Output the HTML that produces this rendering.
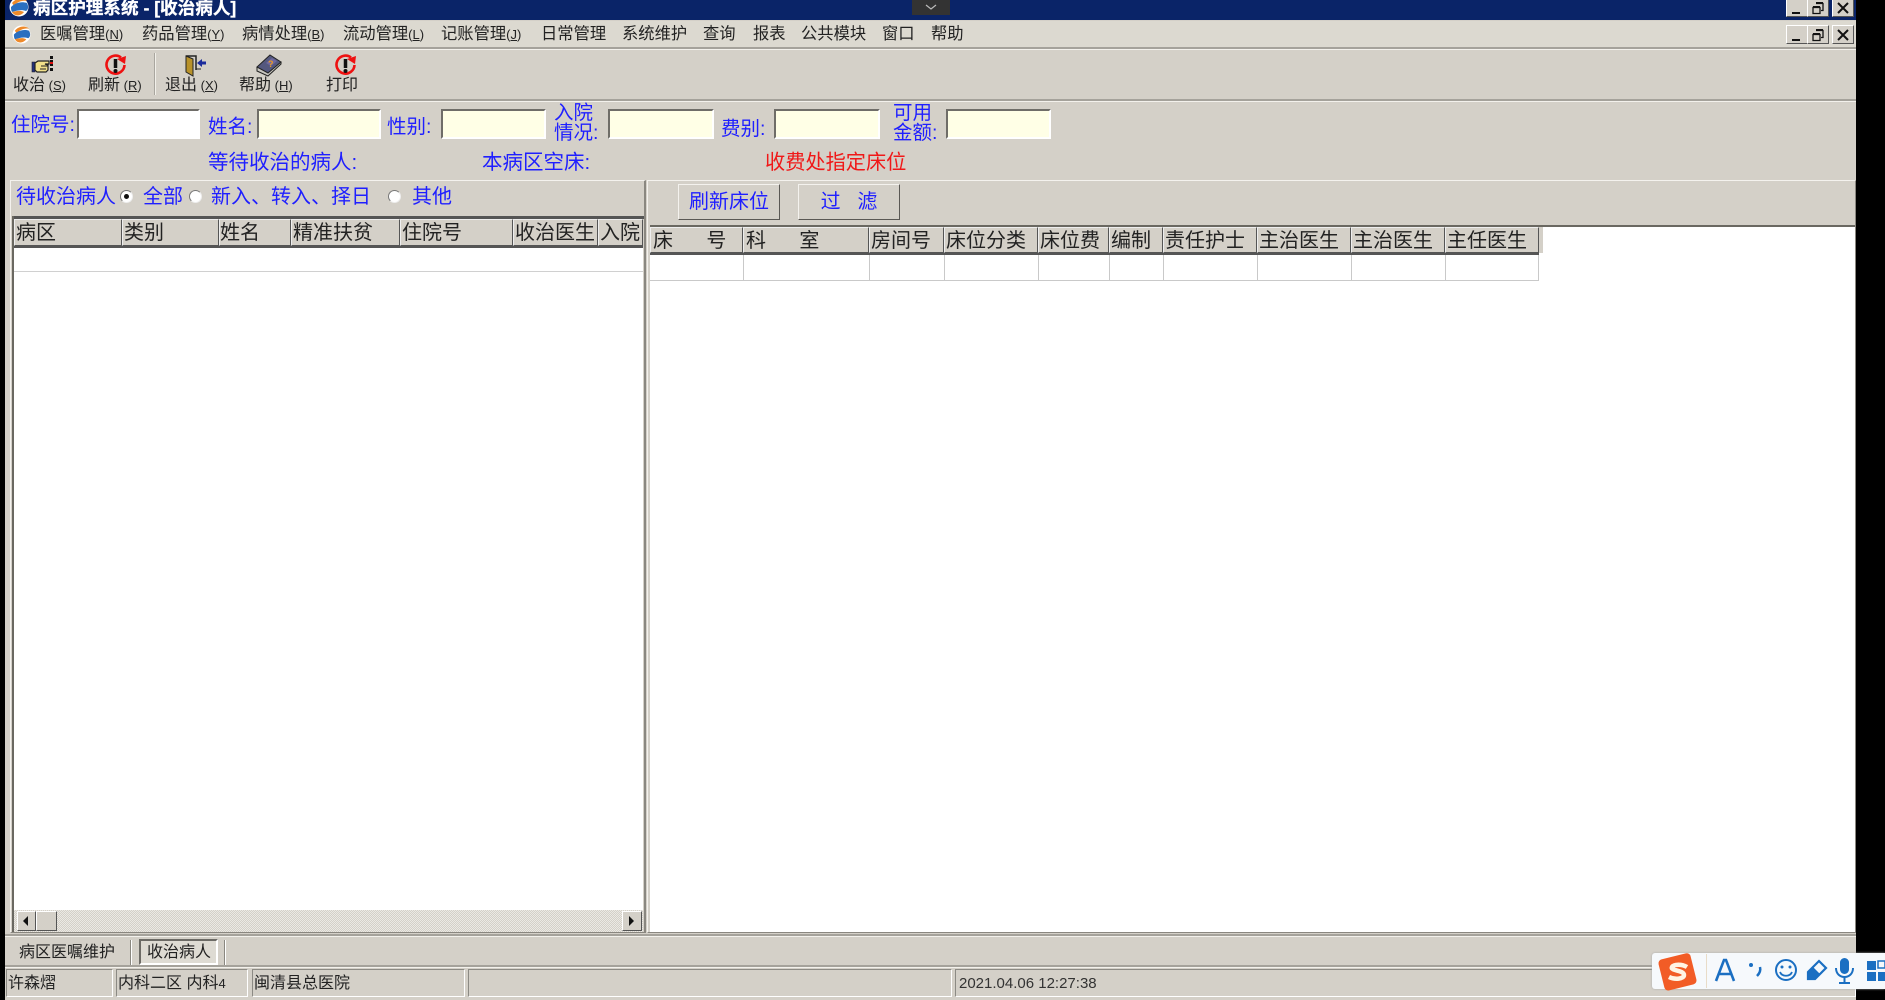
<!DOCTYPE html>
<html lang="zh"><head><meta charset="utf-8"><title>病区护理系统</title>
<style>
html,body{margin:0;padding:0;width:1885px;height:1000px;overflow:hidden;background:#000}
#s{position:absolute;left:0;top:0;width:1885px;height:1000px;overflow:hidden;background:#000;font-family:"Liberation Sans","WenQuanYi Zen Hei","Noto Sans CJK SC",sans-serif}
#a{position:absolute;left:5px;top:0;width:1851px;height:1000px;background:#d4d0c8;overflow:hidden;filter:blur(.35px)}
.b{position:absolute;box-sizing:border-box}
.t{position:absolute;white-space:nowrap;line-height:1;color:#222}
.u{color:#1f1fff}
.m{font-size:16.300px;top:26px;color:#222}
.m small,.l small{font-size:13px;letter-spacing:0}
.l{font-size:16px;top:78px}
.i{position:absolute;box-sizing:border-box;height:30px;top:109px;background:#ffffe6;border:2px solid;border-color:#6f6d68 #fff #fff #6f6d68}
.f{font-size:19.500px}
.g{font-size:20.500px}
.ln{position:absolute;height:2px;background:#a5a29b;border-bottom:1px solid #f3f1ec}
.w{position:absolute;box-sizing:border-box;width:22px;height:19px;background:#d4d0c8;border:1px solid;border-color:#fff #555 #555 #fff}
.w svg{position:absolute;left:2px;top:1px}
.h{position:absolute;box-sizing:border-box;background:#d4d0c8;border:1px solid;border-color:#eee #555 #555 #eee;font-size:20px;line-height:26px;padding-left:1px;white-space:nowrap;overflow:hidden;color:#222}
.c{position:absolute;background:#c9c9c9;width:1px}
.ra{position:absolute;width:13px;height:13px;border-radius:50%;background:#fff;border:1px solid #777;border-right-color:#eee;border-bottom-color:#eee;box-sizing:border-box}
.st{position:absolute;box-sizing:border-box;top:969px;height:28px;border:1px solid;border-color:#8c8a84 #fff #fff #8c8a84;font-size:16px;line-height:27px;padding-left:1px;white-space:nowrap;color:#222}
</style></head><body>
<div id="s"><div id="a">
<!-- title -->
<div class="b" style="left:0;top:0;width:1851px;height:20px;background:#0a2468;overflow:hidden">
<div class="t" style="left:28px;top:0;font-size:17.600px;font-weight:bold;color:#fff;-webkit-text-stroke:.3px #fff">病区护理系统 - [收治病人]</div>
<svg style="position:absolute;left:4px;top:-3px" width="20" height="20" viewBox="0 0 20 20"><circle cx="10" cy="10" r="9.500" fill="#fff"/><path d="M3 6C7 1 14 0 18 4 13 3 8 5 5 9z" fill="#ee8a2a"/><path d="M2 10C6 6 12 4 18 6c2 4 1 7-1 8-5-2-10 0-14 1-1-2-1-3-1-5z" fill="#2a6fc0"/><path d="M3 15c4-1 8-2 12 0-3 4-9 5-12 0z" fill="#ee8a2a"/></svg>
</div>
<div class="b" style="left:907px;top:0;width:38px;height:15px;background:#333"><svg width="38" height="15"><path d="M14 5l5 4 5-4" stroke="#bbb" stroke-width="1.200" fill="none"/></svg></div>
<div class="w" style="left:1781px;top:-2px"><svg width="16" height="16"><path d="M3 13h8" stroke="#111" stroke-width="2"/></svg></div>
<div class="w" style="left:1802px;top:-2px"><svg width="16" height="16"><path d="M6 3.500h7v7h-2M3 7.500h7v6H3z" stroke="#111" stroke-width="1.300" fill="none"/><path d="M6 3h7M3 7h7" stroke="#111" stroke-width="2"/></svg></div>
<div class="w" style="left:1827px;top:-2px"><svg width="16" height="16"><path d="M3 3l10 10M13 3L3 13" stroke="#111" stroke-width="2"/></svg></div>
<!-- menu -->
<div class="b" style="left:0;top:21px;width:1851px;height:26px;background:#dcd9d0"></div>
<svg style="position:absolute;left:7px;top:25px" width="19" height="19" viewBox="0 0 20 20"><circle cx="10" cy="10" r="9.500" fill="#fff"/><path d="M3 6C7 1 14 0 18 4 13 3 8 5 5 9z" fill="#ee8a2a"/><path d="M2 10C6 6 12 4 18 6c2 4 1 7-1 8-5-2-10 0-14 1-1-2-1-3-1-5z" fill="#2a6fc0"/><path d="M3 15c4-1 8-2 12 0-3 4-9 5-12 0z" fill="#ee8a2a"/></svg>
<div class="t m" style="left:35px">医嘱管理<small>(<u>N</u>)</small></div>
<div class="t m" style="left:137px">药品管理<small>(<u>Y</u>)</small></div>
<div class="t m" style="left:237px">病情处理<small>(<u>B</u>)</small></div>
<div class="t m" style="left:338px">流动管理<small>(<u>L</u>)</small></div>
<div class="t m" style="left:436px">记账管理<small>(<u>J</u>)</small></div>
<div class="t m" style="left:536px">日常管理</div>
<div class="t m" style="left:617px">系统维护</div>
<div class="t m" style="left:698px">查询</div>
<div class="t m" style="left:748px">报表</div>
<div class="t m" style="left:796px">公共模块</div>
<div class="t m" style="left:877px">窗口</div>
<div class="t m" style="left:926px">帮助</div>
<div class="w" style="left:1781px;top:25px"><svg width="16" height="16"><path d="M3 13h8" stroke="#111" stroke-width="2"/></svg></div>
<div class="w" style="left:1802px;top:25px"><svg width="16" height="16"><path d="M6 3.500h7v7h-2M3 7.500h7v6H3z" stroke="#111" stroke-width="1.300" fill="none"/><path d="M6 3h7M3 7h7" stroke="#111" stroke-width="2"/></svg></div>
<div class="w" style="left:1827px;top:25px"><svg width="16" height="16"><path d="M3 3l10 10M13 3L3 13" stroke="#111" stroke-width="2"/></svg></div>
<div class="ln" style="left:0;top:47px;width:1851px"></div>
<!-- toolbar -->
<svg style="position:absolute;left:26px;top:55px" width="26" height="20" viewBox="0 0 26 20"><path d="M1 7h3v10H1z" fill="#24307a" stroke="#222" stroke-width=".6"/><path d="M4 8l3-2h11v3h-4l3 1v5l-2 2H6l-2-2z" fill="#f1e08a" stroke="#222" stroke-width="1.200"/><path d="M10 11h7M9 14h6" stroke="#222"/><path d="M20.500 1v3M20.500 6v0M20.500 13v3" stroke="#111" stroke-width="3"/><path d="M20.500 5v6" stroke="#111" stroke-width="3" stroke-dasharray="2 2"/><path d="M20.500 7v2" stroke="#d11" stroke-width="3"/></svg>
<svg style="position:absolute;left:99px;top:54px" width="24" height="22" viewBox="0 0 24 22"><path d="M17 3.500A9 9 0 1 0 20.500 11" fill="none" stroke="#ee1111" stroke-width="2.600"/><path d="M13 5l9-3-1 8z" fill="#ee1111"/><path d="M11.500 5v9" stroke="#111" stroke-width="3.500"/><circle cx="11.500" cy="17" r="2" fill="#111"/></svg>
<div class="b" style="left:149px;top:53px;width:2px;height:42px;background:#a9a69f;border-right:1px solid #f2f0ea"></div>
<svg style="position:absolute;left:179px;top:55px" width="24" height="22" viewBox="0 0 24 22"><path d="M2 1h10v14" fill="none" stroke="#222" stroke-width="1.500"/><path d="M2 1l7 3v17l-7-4z" fill="#b8922a" stroke="#222"/><path d="M12 14h5" stroke="#222"/><path d="M13 8l5-4v2.500h4v3h-4V12z" fill="#1c2c9c"/></svg>
<svg style="position:absolute;left:251px;top:54px" width="26" height="23" viewBox="0 0 26 23"><path d="M1 13v4l11 5 13-12v-2z" fill="#c8c6c0" stroke="#222"/><path d="M1 13L14 1l11 7-13 11z" fill="#54587e" stroke="#222"/><path d="M10 9l6-5 5 3-6 5z" fill="#6e68a0"/><text x="12" y="13" font-size="9" font-weight="bold" fill="#ee9a20" font-family="Liberation Sans">?</text></svg>
<svg style="position:absolute;left:329px;top:54px" width="24" height="22" viewBox="0 0 24 22"><path d="M17 3.500A9 9 0 1 0 20.500 11" fill="none" stroke="#ee1111" stroke-width="2.600"/><path d="M13 5l9-3-1 8z" fill="#ee1111"/><path d="M11.500 5v9" stroke="#111" stroke-width="3.500"/><circle cx="11.500" cy="17" r="2" fill="#111"/></svg>
<div class="t l" style="left:8px">收治<small> (<u>S</u>)</small></div>
<div class="t l" style="left:83px">刷新<small> (<u>R</u>)</small></div>
<div class="t l" style="left:160px">退出<small> (<u>X</u>)</small></div>
<div class="t l" style="left:234px">帮助<small> (<u>H</u>)</small></div>
<div class="t l" style="left:321px">打印</div>
<div class="ln" style="left:0;top:99px;width:1851px"></div>
<!-- form -->
<div class="t f u" style="left:6px;top:116px">住院号:</div>
<div class="i" style="left:72px;width:123px;background:#fff"></div>
<div class="t f u" style="left:203px;top:118px">姓名:</div><div class="i" style="left:252px;width:124px"></div>
<div class="t f u" style="left:382px;top:118px">性别:</div><div class="i" style="left:436px;width:105px"></div>
<div class="t f u" style="left:549px;top:104px">入院</div><div class="t f u" style="left:549px;top:124px">情况:</div><div class="i" style="left:603px;width:106px"></div>
<div class="t f u" style="left:716px;top:120px">费别:</div><div class="i" style="left:769px;width:106px"></div>
<div class="t f u" style="left:888px;top:104px">可用</div><div class="t f u" style="left:888px;top:124px">金额:</div><div class="i" style="left:941px;width:105px"></div>
<div class="t g u" style="left:203px;top:153px">等待收治的病人:</div>
<div class="t g u" style="left:477px;top:153px">本病区空床:</div>
<div class="t" style="left:760px;top:153px;font-size:20.200px;color:#f01818">收费处指定床位</div>
<!-- left panel -->
<div class="b" style="left:5px;top:180px;width:636px;height:753px;border:1px solid;border-color:#f4f2ee #8a8780 #8a8780 #f4f2ee;border-right-width:2px"></div>
<div class="t u" style="left:11px;top:187px;font-size:20px">待收治病人</div>
<div class="ra" style="left:115px;top:190px"><div style="position:absolute;left:3px;top:3px;width:5px;height:5px;border-radius:50%;background:#111"></div></div>
<div class="t u" style="left:138px;top:187px;font-size:20px">全部</div>
<div class="ra" style="left:184px;top:190px"></div>
<div class="t u" style="left:206px;top:187px;font-size:20px">新入、转入、择日</div>
<div class="ra" style="left:383px;top:190px"></div>
<div class="t u" style="left:407px;top:187px;font-size:20px">其他</div>
<div class="b" style="left:7px;top:216px;width:632px;height:3px;background:#555"></div>
<div class="b" style="left:8px;top:219px;width:630px;height:691px;background:#fff;overflow:hidden"></div>
<div class="b" style="left:7px;top:216px;width:2px;height:716px;background:#6a6861"></div>
<div class="h" style="left:9px;top:219px;width:108px;height:27px">病区</div>
<div class="h" style="left:117px;top:219px;width:97px;height:27px">类别</div>
<div class="h" style="left:214px;top:219px;width:72px;height:27px;padding-left:0">姓名</div>
<div class="h" style="left:286px;top:219px;width:109px;height:27px">精准扶贫</div>
<div class="h" style="left:395px;top:219px;width:113px;height:27px">住院号</div>
<div class="h" style="left:508px;top:219px;width:85px;height:27px">收治医生</div>
<div class="h" style="left:593px;top:219px;width:45px;height:27px">入院</div>
<div class="b" style="left:9px;top:246px;width:629px;height:2px;background:#555"></div>
<div class="b" style="left:9px;top:271px;width:629px;height:1px;background:#d0d0d0"></div>
<div class="b" style="left:9px;top:910px;width:629px;height:22px;background:repeating-conic-gradient(#d4d0c8 0 25%,#ebe9e4 0 50%) 0 0/2px 2px"></div>
<div class="w" style="left:12px;top:911px;width:19px;height:20px"><svg style="left:3px;top:3px" width="10" height="12"><path d="M7 1v10L2 6z" fill="#111"/></svg></div>
<div class="w" style="left:31px;top:911px;width:21px;height:20px"></div>
<div class="w" style="left:617px;top:911px;width:20px;height:20px"><svg style="left:4px;top:3px" width="10" height="12"><path d="M2 1v10l5-5z" fill="#111"/></svg></div>
<!-- right panel -->
<div class="b" style="left:642px;top:180px;width:1209px;height:753px;border:1px solid;border-color:#f4f2ee #8a8780 #8a8780 #f4f2ee"></div>
<div class="b u" style="left:673px;top:184px;width:102px;height:36px;border:1px solid;border-color:#f4f2ee #5a5854 #5a5854 #f4f2ee;font-size:20px;line-height:35px;text-align:center">刷新床位</div>
<div class="b u" style="left:793px;top:184px;width:102px;height:36px;border:1px solid;border-color:#f4f2ee #5a5854 #5a5854 #f4f2ee;font-size:20px;line-height:35px;text-align:center;white-space:pre">过  &nbsp;滤</div>
<div class="b" style="left:645px;top:225px;width:1205px;height:707px;background:#fff"></div>
<div class="b" style="left:645px;top:225px;width:1205px;height:2px;background:#6a6861"></div>
<div class="b" style="left:645px;top:227px;width:893px;height:26px;background:#d4d0c8"></div>
<div class="h" style="left:645px;top:227px;width:93px;height:26px;padding-left:2px;white-space:pre">床      号</div>
<div class="h" style="left:738px;top:227px;width:126px;height:26px;padding-left:2px;white-space:pre">科      室</div>
<div class="h" style="left:864px;top:227px;width:75px;height:26px">房间号</div>
<div class="h" style="left:939px;top:227px;width:94px;height:26px">床位分类</div>
<div class="h" style="left:1033px;top:227px;width:71px;height:26px">床位费</div>
<div class="h" style="left:1104px;top:227px;width:54px;height:26px">编制</div>
<div class="h" style="left:1158px;top:227px;width:94px;height:26px">责任护士</div>
<div class="h" style="left:1252px;top:227px;width:94px;height:26px">主治医生</div>
<div class="h" style="left:1346px;top:227px;width:94px;height:26px">主治医生</div>
<div class="h" style="left:1440px;top:227px;width:94px;height:26px">主任医生</div>
<div class="b" style="left:645px;top:253px;width:889px;height:2px;background:#555"></div>
<div class="b" style="left:645px;top:280px;width:889px;height:1px;background:#c9c9c9"></div>
<div class="c" style="left:738px;top:255px;height:25px"></div>
<div class="c" style="left:864px;top:255px;height:25px"></div>
<div class="c" style="left:939px;top:255px;height:25px"></div>
<div class="c" style="left:1033px;top:255px;height:25px"></div>
<div class="c" style="left:1104px;top:255px;height:25px"></div>
<div class="c" style="left:1158px;top:255px;height:25px"></div>
<div class="c" style="left:1252px;top:255px;height:25px"></div>
<div class="c" style="left:1346px;top:255px;height:25px"></div>
<div class="c" style="left:1440px;top:255px;height:25px"></div>
<div class="c" style="left:1533px;top:255px;height:25px"></div>
<!-- tabs -->
<div class="ln" style="left:0;top:934px;width:1851px;background:#a5a29b"></div>
<div class="t" style="left:14px;top:945px;font-size:16px">病区医嘱维护</div>
<div class="b" style="left:125px;top:940px;width:2px;height:25px;border-left:1px solid #8a8780;border-right:1px solid #fff"></div>
<div class="b" style="left:134px;top:939px;width:79px;height:26px;background:#dedbd3;border:2px solid;border-color:#6c6a65 #fff #fff #6c6a65;font-size:16px;line-height:24px;padding-left:6px;color:#222">收治病人</div>
<div class="b" style="left:219px;top:940px;width:2px;height:25px;border-left:1px solid #8a8780;border-right:1px solid #fff"></div>
<div class="ln" style="left:0;top:965px;width:1851px;background:#a5a29b"></div>
<!-- status -->
<div class="st" style="left:1px;width:107px">许森熠</div>
<div class="st" style="left:111px;width:132px">内科二区 内科<span style="font-size:13px">4</span></div>
<div class="st" style="left:247px;width:213px">闽清县总医院</div>
<div class="st" style="left:463px;width:484px"></div>
<div class="st" style="left:950px;width:901px;font-size:15px;padding-left:3px;color:#333">2021.04.06 12:27:38</div>
</div>
<!-- IME bar -->
<div class="b" style="left:1652px;top:953px;width:233px;height:36px;background:#f6f9fc;border-radius:3px 0 0 3px;box-shadow:0 0 2px #aaa">
<div class="b" style="left:54px;top:1px;width:1px;height:34px;background:#e8dcc8"></div>
<svg style="position:absolute;left:0;top:-3px" width="233" height="44" viewBox="0 0 233 44">
<rect x="9" y="6" width="33" height="32" rx="4" fill="#f25c26" transform="rotate(-14 25 22)"/>
<path d="M35 17c-5-3-13-3-15 0-2 4 12 3 12 8 0 4-9 5-15 2" fill="none" stroke="#fff4e4" stroke-width="4.500"/>
<path d="M64 31l8-21h2l8 21M67 24h12" fill="none" stroke="#1b6fc2" stroke-width="2.600"/>
<circle cx="99" cy="15" r="2" fill="#1b6fc2"/><path d="M108 17c1 4-1 7-3 9" fill="none" stroke="#1b6fc2" stroke-width="2.500"/>
<circle cx="134" cy="20" r="10" fill="none" stroke="#1b6fc2" stroke-width="2"/><circle cx="130" cy="17" r="1.500" fill="#1b6fc2"/><circle cx="138" cy="17" r="1.500" fill="#1b6fc2"/><path d="M128 22c2 5 10 5 12 0" fill="none" stroke="#1b6fc2" stroke-width="1.800"/>
<path d="M156 22l11-11 7 7-11 11h-7z" fill="none" stroke="#1b6fc2" stroke-width="2.200"/><path d="M156 22l5-5 7 7-5 5h-7z" fill="#1b6fc2"/>
<rect x="188" y="8" width="9" height="16" rx="4.500" fill="#1b6fc2"/><path d="M184 18c0 12 17 12 17 0M192.500 27v5M187 33h11" fill="none" stroke="#1b6fc2" stroke-width="2"/>
<rect x="215" y="11" width="9" height="9" fill="#1b6fc2"/><rect x="226" y="11" width="7" height="7" fill="none" stroke="#1b6fc2" stroke-width="1.500"/><rect x="215" y="22" width="9" height="9" fill="#1b6fc2"/><rect x="226" y="22" width="7" height="9" fill="#1b6fc2"/>
</svg></div>
</div>
</body></html>
